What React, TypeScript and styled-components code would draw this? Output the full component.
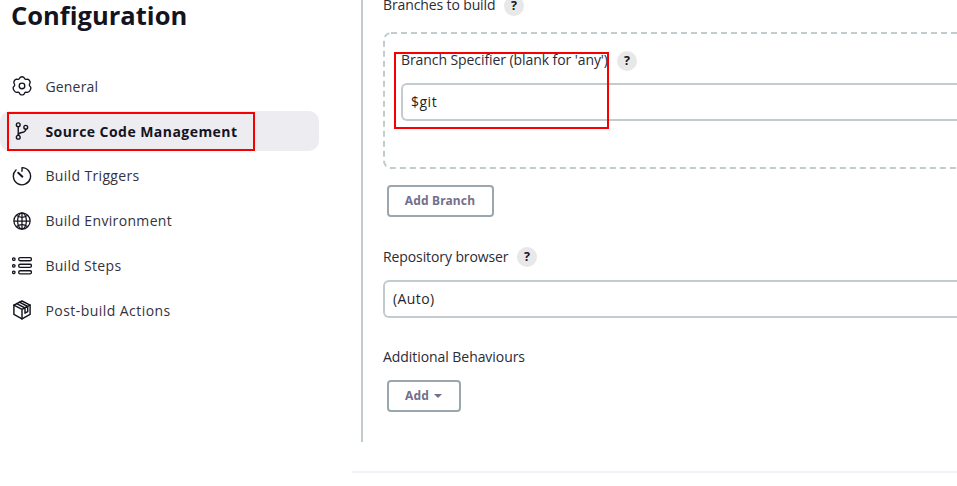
import React from "react";
import styled, { createGlobalStyle } from "styled-components";
import { IoGitBranchOutline, IoGlobeOutline } from "react-icons/io5";

const GlobalStyle = createGlobalStyle`
  * { box-sizing: border-box; }
  html, body { margin: 0; height: 100%; overflow: hidden; background: #fff; }
  body { font-family: "Open Sans", "Noto Sans", sans-serif; color: #14141f; }
`;

const Page = styled.div`
  display: grid;
  grid-template-columns: 352px 1fr;
  height: 486px;
  overflow: hidden;
`;

const Sidebar = styled.aside`
  position: relative;
  padding-right: 33px;
`;

const Title = styled.h1`
  margin: 0 0 35.4px 11px;
  height: 31px;
  font-size: 25.5px;
  line-height: 31px;
  font-weight: 700;
  letter-spacing: 0.02px;
  white-space: nowrap;
`;

const Nav = styled.nav`
  display: flex;
  flex-direction: column;
  gap: 4.8px;
`;

const NavItem = styled.a<{ $active?: boolean; $spacing: number }>`
  display: flex;
  align-items: center;
  gap: 13.4px;
  height: 40px;
  padding-left: 12px;
  border-radius: 10px;
  background: ${(p) => (p.$active ? "#edecf1" : "transparent")};
  font-size: 14px;
  font-weight: ${(p) => (p.$active ? 700 : 400)};
  color: ${(p) => (p.$active ? "#14141f" : "#333340")};
  letter-spacing: ${(p) => p.$spacing}px;
  white-space: nowrap;

  svg { width: 20px; height: 20px; flex: none; color: #14141f; }
`;

const BranchIcon = styled(IoGitBranchOutline)`
  path, circle { stroke-width: 36px; }
`;

const Highlight = styled.div<{ $x: number; $y: number; $w: number; $h: number }>`
  position: absolute;
  left: ${(p) => p.$x}px;
  top: ${(p) => p.$y}px;
  width: ${(p) => p.$w}px;
  height: ${(p) => p.$h}px;
  border: 2px solid #f80000;
  pointer-events: none;
`;

const Main = styled.main`
  min-width: 0;
`;

const Section = styled.section`
  height: 446px;
  margin: -4px 0 0 9px;
  padding-left: 20px;
  border-left: 2px solid #c2cccf;
`;

const Label = styled.div<{ $spacing: number }>`
  display: flex;
  align-items: center;
  gap: 8px;
  height: 20px;
  font-size: 14px;
  letter-spacing: ${(p) => p.$spacing}px;
  color: #2b2b36;
  white-space: nowrap;
`;

const LabelText = styled.span<{ $w: number; $lift?: number }>`
  width: ${(p) => p.$w}px;
  line-height: 20px;
  padding-bottom: ${(p) => p.$lift ?? 0}px;
`;

const Help = styled.span`
  display: grid;
  place-items: center;
  width: 20px;
  height: 20px;
  border-radius: 50%;
  background: #e8e8e8;
  font-size: 12.5px;
  line-height: 20px;
  font-weight: 700;
  letter-spacing: 0;
  color: #14141f;
`;

const Repeatable = styled.div`
  position: relative;
  height: 137px;
  margin-top: 16px;
  padding: 19px 0 0 18px;
`;

const DashedOutline = styled.svg`
  position: absolute;
  left: 0;
  top: 0;
  width: 574px;
  height: 137px;
`;

const Field = styled.div<{ $spacing: number }>`
  display: flex;
  align-items: center;
  height: 38px;
  padding: 0 0 1px 8px;
  border: 2px solid #c2cccf;
  border-right: 0;
  border-radius: 6px 0 0 6px;
  font-size: 14px;
  letter-spacing: ${(p) => p.$spacing}px;
  color: #1f1f2a;
  background: #fff;
`;

const Button = styled.button<{ $w: number }>`
  display: flex;
  align-items: center;
  justify-content: center;
  gap: 5px;
  width: ${(p) => p.$w}px;
  height: 32px;
  margin-left: 4px;
  padding: 0 1px 2px 0;
  border: 2px solid #9ba7af;
  border-radius: 4px;
  background: #fff;
  color: #73708c;
  font: 700 12px "Noto Sans", sans-serif;
  letter-spacing: 0.16px;
`;

const Caret = styled.span`
  border: 4px solid transparent;
  border-top-color: #73708c;
  border-bottom: 0;
  margin-top: 2px;
`;

const Spacer = styled.div<{ $h: number }>`
  height: ${(p) => p.$h}px;
`;

const Divider = styled.hr`
  height: 2px;
  margin: 29px 0 0;
  border: 0;
  background: #f1f1f7;
`;

const stroke = {
  fill: "none",
  stroke: "currentColor",
  strokeLinecap: "round",
  strokeLinejoin: "round",
} as const;

const GearIcon = () => (
  <svg viewBox="0 0 20 20" {...stroke} strokeWidth="1.35">
    <path d="M8 1.5Q10 .1 12 1.5L12.6 2.7Q13.2 3.5 14 3.4L15.7 3.2Q17.8 4 18.2 6.2L17.6 8Q17.1 9 17.6 9.8L18.7 11.2Q19.2 12.7 18 14.5Q17 16.2 15.5 16.4L13.9 16.2Q13.1 16.2 12.7 16.8L12 18.2Q10 19.6 8 18.2L7.3 16.8Q6.9 16.2 6.1 16.2L4.5 16.4Q3 16.2 2 14.5Q.8 12.7 1.3 11.2L2.4 9.8Q2.9 9 2.4 8L1.8 6.2Q2.2 4 4.3 3.2L6 3.4Q6.8 3.5 7.4 2.7Z" />
    <circle cx="10" cy="9.9" r="2.8" />
  </svg>
);

const TimerIcon = () => (
  <svg viewBox="0 0 20 20" {...stroke} strokeWidth="1.4">
    <path d="M10 5.3V1.6A8.6 8.6 0 1 1 4 4" />
    <path d="M6.2 6.7L10.4 10.7" strokeWidth="1.9" />
  </svg>
);

const StepsIcon = () => (
  <svg viewBox="0 0 20 20" {...stroke} strokeWidth="1.3">
    {[3.2, 9.8, 16.3].map((y) => (
      <g key={y}>
        <circle cx="1.8" cy={y} r="1.25" />
        <rect x="6.7" y={y - 1.55} width="12.7" height="3.1" rx="1.4" />
      </g>
    ))}
  </svg>
);

const PackageIcon = () => (
  <svg viewBox="0 0 20 20" {...stroke} strokeWidth="1.45">
    <path d="M10 1L18.1 5.1V14.4L10 18.9L1.9 14.4V5.1Z" />
    <path d="M1.9 5.1L10 9.4L18.1 5.1M10 9.4V18.9M4.7 3.6L13 8V13.2L15.7 11.7V6.5L7.4 2.2" />
  </svg>
);

const navItems = [
  { label: "General", icon: <GearIcon />, spacing: 0.2 },
  { label: "Source Code Management", icon: <BranchIcon />, active: true, spacing: 0.45 },
  { label: "Build Triggers", icon: <TimerIcon />, spacing: 0.35 },
  { label: "Build Environment", icon: <IoGlobeOutline />, spacing: 0.34 },
  { label: "Build Steps", icon: <StepsIcon />, spacing: 0.3 },
  { label: "Post-build Actions", icon: <PackageIcon />, spacing: 0.45 },
];

export default function App() {
  return (
    <>
      <GlobalStyle />
      <Page>
        <Sidebar>
          <Title>Configuration</Title>
          <Nav>
            {navItems.map((item) => (
              <NavItem key={item.label} $active={item.active} $spacing={item.spacing}>
                {item.icon}
                <span>{item.label}</span>
              </NavItem>
            ))}
          </Nav>
          <Highlight $x={7} $y={112} $w={248} $h={39} />
        </Sidebar>
        <Main>
          <Section>
            <Label $spacing={-0.12}>
              <LabelText $w={113} $lift={2}>Branches to build</LabelText>
              <Help>?</Help>
            </Label>
            <Repeatable>
              <DashedOutline>
                <rect x="1" y="1" width="640" height="135" rx="7" fill="none" stroke="#c2cccf" strokeWidth="2" strokeDasharray="6 4" />
              </DashedOutline>
              <Label $spacing={-0.08}>
                <LabelText $w={208} $lift={2}>Branch Specifier (blank for 'any')</LabelText>
                <Help>?</Help>
              </Label>
              <Spacer $h={12} />
              <Field $spacing={0.5}>$git</Field>
              <Highlight $x={11} $y={20} $w={215} $h={77} />
            </Repeatable>
            <Spacer $h={16} />
            <Button $w={107}>Add Branch</Button>
            <Spacer $h={30} />
            <Label $spacing={-0.1}>
              <LabelText $w={126}>Repository browser</LabelText>
              <Help>?</Help>
            </Label>
            <Spacer $h={13} />
            <Field $spacing={0.4}>(Auto)</Field>
            <Spacer $h={29} />
            <Label $spacing={-0.06}>
              <LabelText $w={142}>Additional Behaviours</LabelText>
            </Label>
            <Spacer $h={13} />
            <Button $w={74}>
              Add <Caret />
            </Button>
          </Section>
          <Divider />
        </Main>
      </Page>
    </>
  );
}
